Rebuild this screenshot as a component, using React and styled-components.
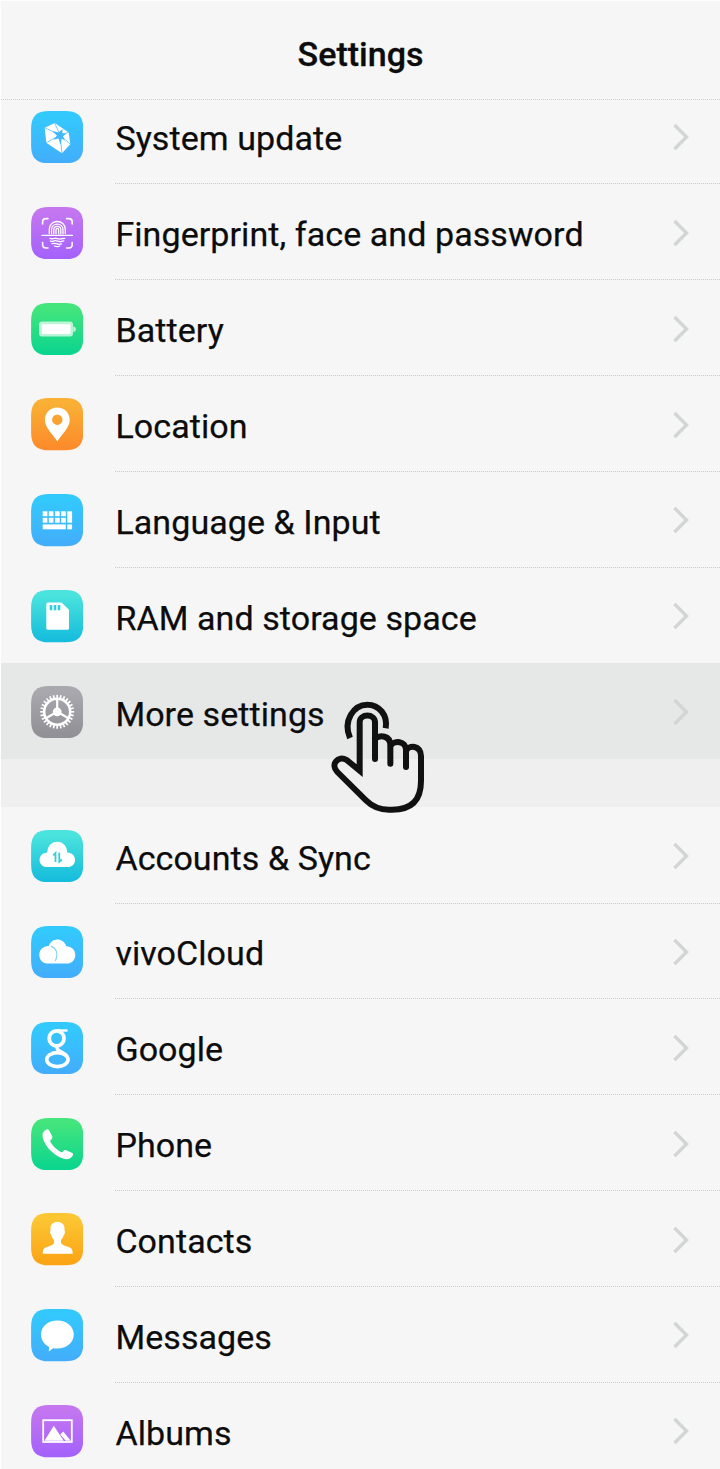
import React from "react";
import styled, { createGlobalStyle } from "styled-components";

const GlobalStyle = createGlobalStyle`
  * { box-sizing: border-box; }
  html, body { margin: 0; background: #f6f6f6; }
`;

const Screen = styled.main`
  width: 720px;
  height: 1469px;
  overflow: hidden;
  display: flex;
  flex-direction: column;
  background: #f6f6f6;
  border-top: 1px solid #fefefe;
  border-left: 1px solid #fefefe;
  color: #0c0c0c;
  font-family: Roboto, "Liberation Sans", sans-serif;
`;

const Header = styled.header`
  flex: none;
  height: 99px;
  display: flex;
  align-items: center;
  justify-content: center;
  padding-top: 7px;
  border-bottom: 1px dotted #cbcccd;
`;

const Title = styled.h1`
  margin: 0;
  font-size: 34px;
  line-height: 40px;
  font-weight: 500;
  -webkit-text-stroke: 0.3px #0c0c0c;
`;

const Viewport = styled.div`
  flex: 1;
  min-height: 0;
  overflow: hidden;
`;

const List = styled.div`
  margin-top: -11.9px;
`;

const Group = styled.section`
  & + & {
    border-top: 48px solid #efeff0;
  }
`;

const Row = styled.div`
  position: relative;
  height: 95.88px;
  display: flex;
  align-items: center;
  padding-left: 30px;
  background: ${(p) => (p.$active ? "#e6e7e7" : "transparent")};
`;

const Tile = styled.svg`
  flex: none;
  display: block;
  width: 52.4px;
  height: 52.4px;
  margin-top: 2px;
`;

const Body = styled.div`
  flex: 1;
  height: 100%;
  margin-left: 32px;
  padding-right: 30px;
  display: flex;
  align-items: center;
  justify-content: space-between;
  position: relative;
  top: 0.4px;
  border-bottom: 1px dotted ${(p) => (p.$line ? "#c9cacd" : "transparent")};
`;

const Label = styled.span`
  font-size: 34px;
  line-height: 40px;
  padding-top: 5px;
  letter-spacing: 0.08px;
  white-space: nowrap;
  -webkit-text-stroke: 0.25px #0c0c0c;
`;

const Chevron = styled.svg`
  width: 18px;
  height: 28px;
  margin-top: 2px;
  fill: none;
  stroke: #d2d5d5;
  stroke-width: 3.4;
`;

const TapHand = styled.svg`
  position: absolute;
  left: 329px;
  top: 36.6px;
  width: 96.7px;
  height: 115px;
  z-index: 2;
  fill: none;
  stroke: #111;
  stroke-width: 18;
`;

const palettes = {
  blue: ["#33c9fd", "#42aefb"],
  purple: ["#c476f0", "#a562fb"],
  green: ["#43e57c", "#0cd58e"],
  orange: ["#f9b034", "#fc8b2b"],
  teal: ["#4ae3dd", "#16bddc"],
  gray: ["#a9a8ae", "#919096"],
  yellow: ["#fcc633", "#fba415"],
};

const spin = (n) => Array.from({ length: n }, (_, i) => (i * 360) / n);

const glyphs = {
  update: (
    <>
      <path d="M13.7 16.7 23.7 12 37.7 21.4 39.3 33.3 31 42.3 15.3 31.7Z" fill="#fff" />
      <path d="M29 24 13.7 16.7M29 24 23.7 12M29 24 37.7 21.4M29 24 39.3 33.3M29 24 31 42.3M29 24 15.3 31.7" stroke="#55bffb" strokeWidth=".8" />
      <path d="M21.500 20 27.500 21.500 31.500 18 31.300 22.300 35.500 22.500 32 25.300 34 29.500 30.600 27.700 29.700 34 27.500 27.500 22.500 28.800 26 24.700Z" fill="#3fb9fc" />
    </>
  ),
  finger: (
    <g fill="none" stroke="#fff" strokeLinecap="round">
      <path strokeWidth="1.6" d="M11.6 17V15q0-3.4 3.4-3.4h2M35.6 11.6h2.2q3.4 0 3.4 3.4v2M41.2 35.6v2q0 3.4-3.4 3.4h-2.2M17 41h-2q-3.4 0-3.4-3.4v-2" />
      <path strokeWidth="1.4" d="M11 28.4h30.4" />
      <path strokeWidth="1.3" d="M18.3 26.5v-4.2c0-10.4 16-10.4 16 0v4.2M20.6 26.8v-4.3c0-7.2 11.4-7.2 11.4 0v4.3M22.8 26.8v-4.2c0-4.4 7-4.4 7 0v4.2M25 26.8v-4c0-1.8 2.6-1.8 2.6 0v4" />
      <path strokeWidth="1.3" d="M18.8 31.3c1.8 1 3 .2 4.8 0 2-.3 3.5 1 5.4.8 1.600-.1 3-.8 4.800-.8M19.300 34c2 1 3-.3 5-.3s3.500 1.300 5.500 1c1.200-.2 2-.7 3-.9M21 36.700c2-.700 3.500-.500 5 .200s2.500.700 4.500.1M23.500 39c2 .8 3.500.8 5.300 0" />
    </g>
  ),
  battery: (
    <>
      <rect x="8" y="18.6" width="34" height="15" rx="3" fill="#fff" opacity=".68" />
      <path d="M42.300 23.200q2.500.500 2.500 3t-2.500 3Z" fill="#fff" opacity=".75" />
      <rect x="10.800" y="21.200" width="28.700" height="9.700" rx="1" fill="#fff" />
    </>
  ),
  pin: (
    <path fill="#fff" fillRule="evenodd" d="M26.300 9.500c-7 0-12.400 5.400-12.400 12.200 0 8.200 8 14.300 12.400 21.800 4.400-7.500 12.400-13.600 12.400-21.800 0-6.800-5.400-12.200-12.400-12.200Zm0 7a5.200 5.200 0 1 1 0 10.400 5.200 5.200 0 0 1 0-10.400Z" />
  ),
  keyboard: (
    <g fill="#fff">
      {[11.7, 17.8, 24, 30.1].map((x) => (
        <React.Fragment key={x}>
          <rect x={x} y="17.3" width="4.7" height="4.9" />
          <rect x={x} y="23.8" width="4.7" height="4.9" />
        </React.Fragment>
      ))}
      <rect x="36.3" y="17.3" width="4.8" height="11.4" />
      <rect x="11.7" y="30.4" width="23.1" height="4.9" />
      <rect x="36.3" y="30.4" width="4.8" height="4.9" />
    </g>
  ),
  card: (
    <>
      <path fill="#fff" d="M17 12.400h13.500l7.500 7.300v18.500q0 1.600-1.600 1.600H17q-1.700 0-1.700-1.600V14q0-1.600 1.700-1.600Z" />
      <path stroke="#2fcfdc" strokeWidth="2.6" d="M20 15v5.200M24 15v5.200M28 15v5.200" />
    </>
  ),
  gear: (
    <g fill="none" stroke="#fff" transform="translate(26.2 25.8)">
      <circle r="13" strokeWidth="2.5" />
      {spin(28).map((a) => (
        <path key={a} d="M0-13.5V-17" strokeWidth="1.7" transform={`rotate(${a})`} />
      ))}
      {spin(3).map((a) => (
        <path key={a} d="M0 0V-13" strokeWidth="2.2" transform={`rotate(${a})`} />
      ))}
      <circle r="4.4" fill="#fff" stroke="none" />
    </g>
  ),
  sync: (
    <>
      <path fill="#fff" d="M16 37c-4.300 0-7.400-3.100-7.400-7.100 0-4.200 3.200-7.300 7.700-7.500C16.500 16 20.600 11.700 26.300 11.700S36 16 36.300 22.400c4.600.2 7.800 3.300 7.800 7.500 0 4-3.200 7.100-7.500 7.100Z" />
      <path fill="none" stroke="#35cedb" strokeWidth="1.8" d="M22.200 25.500 24.500 23v9M30.800 29.500 28.300 31.700V22.400" />
    </>
  ),
  cloud: (
    <>
      <path fill="#fff" d="M17 37.600c-5 0-8.700-3.800-8.700-8.700 0-5.400 4-9 9.300-9C19.500 15.700 22.500 13.500 26 13.500c4.500 0 8 2.700 9.300 6.700 5.200.1 9 3.800 9 8.700s-3.700 8.700-8.700 8.700Z" />
      <path fill="none" stroke="#7fd0fa" strokeWidth="1.1" d="M20 20.400c5.300 1.600 7.800 7.500 4.200 14.500" />
    </>
  ),
  google: (
    <g fill="none" stroke="#fff">
      <ellipse cx="25.6" cy="16.4" rx="7.4" ry="7.6" strokeWidth="3.8" />
      <path strokeWidth="2.4" d="M26 8.500H36.500" />
      <path strokeWidth="2" d="M29.500 9.500l3 3.500" />
      <path strokeWidth="3.4" d="M27 24.500c-1.800 2-.8 3.200 1.200 4.300 3 1.600 6 2.800 8 5.600" />
      <ellipse cx="26.400" cy="37.600" rx="10.700" ry="7" strokeWidth="3.600" />
    </g>
  ),
  phone: (
    <path fill="#fff" d="M15.500 11.500c1.500-.5 2.500.5 3.200 2l2.400 4.600c.7 1.500.2 2.600-1.100 3.600-1.400 1-.7 2.300.8 4.200 2 2.700 4.300 4.900 7 6.900 1.800 1.300 3.200 2.100 4.200.7 1-1.300 2.100-1.800 3.700-1.100l5.100 2.400c1.500.7 1.700 1.800.7 3.200-1.300 1.900-3.200 3.200-5.700 3.200-4.500 0-11.200-3.500-16.300-8.700-4.900-5-8-11.100-8-15.300 0-2.700 1.600-4.800 4-5.700Z" />
  ),
  person: (
    <path fill="#fff" d="M26.400 9c4.600 0 7.100 2.500 7.100 6.500v2.200c1 .3.600 3.300-.7 4-.5 2.200-1.500 4-2.800 5.200v3.200c1.500 2.500 4.600 3 7.600 4 3 1 4 2.300 4.100 6.600h-30c.1-4.300 1.100-5.600 4.100-6.600 3-1 6.100-1.500 7.200-4v-3.200c-1.300-1.200-2.300-3-2.700-5.200-1.300-.7-1.700-3.700-.8-4v-2.200C19.500 11.500 21.800 9 26.400 9Z" />
  ),
  message: (
    <path fill="#fff" d="M26.400 11.600c9.200 0 16.400 6.100 16.400 14s-7.200 14-16.400 14q-2.200 0-4.200-.4L17.800 42.600l.2-4.700C13.200 35.700 10 31 10 25.600c0-7.900 7.200-14 16.400-14Z" />
  ),
  album: (
    <>
      <rect x="12.2" y="15.2" width="28.6" height="21.8" fill="none" stroke="#fff" strokeWidth="1.8" />
      <path fill="#fff" d="M13.500 35.800 22.800 20.700 32.700 35.800ZM29.300 29.500l3-3 7.500 9.300h-5.100Z" />
    </>
  ),
};

function AppIcon({ name, tone }) {
  const [top, bottom] = palettes[tone];
  const id = `fill-${name}`;
  return (
    <Tile viewBox="0 0 52.4 52.4" aria-hidden="true">
      <defs>
        <linearGradient id={id} x1="0" y1="0" x2="0" y2="1">
          <stop offset="0.1" stopColor={top} />
          <stop offset="0.95" stopColor={bottom} />
        </linearGradient>
      </defs>
      <path
        fill={`url(#${id})`}
        d="M18 .1H34.400C47 .1 52.300 5.500 52.300 18V34.400C52.300 47 47 52.300 34.400 52.300H18C5.500 52.300.1 47 .1 34.400V18C.1 5.500 5.500.1 18 .1Z"
      />
      {glyphs[name]}
    </Tile>
  );
}

function Hand() {
  return (
    <TapHand viewBox="60 150 290 345" aria-hidden="true">
      <path d="M120 264C98 214 130 164 172 164C207 164 234 195 227 235" />
      <path strokeLinejoin="miter" d="M195 268V217C195 190 149 190 149 217V362L110 330C84 315 60 344 82 366L168 451C187 470 207 479 237 479H246C305 479 333 450 333 392V318C333 285 296 284 288 302" />
      <path strokeLinecap="round" d="M195 250V327M195 266C210 254 241 256 241 286V341M241 288C252 270 288 272 288 300V351" />
    </TapHand>
  );
}

const groups = [
  [
    { label: "System update", icon: "update", tone: "blue" },
    { label: "Fingerprint, face and password", icon: "finger", tone: "purple" },
    { label: "Battery", icon: "battery", tone: "green" },
    { label: "Location", icon: "pin", tone: "orange" },
    { label: "Language & Input", icon: "keyboard", tone: "blue" },
    { label: "RAM and storage space", icon: "card", tone: "teal" },
    { label: "More settings", icon: "gear", tone: "gray", active: true },
  ],
  [
    { label: "Accounts & Sync", icon: "sync", tone: "teal" },
    { label: "vivoCloud", icon: "cloud", tone: "blue" },
    { label: "Google", icon: "google", tone: "blue" },
    { label: "Phone", icon: "phone", tone: "green" },
    { label: "Contacts", icon: "person", tone: "yellow" },
    { label: "Messages", icon: "message", tone: "blue" },
    { label: "Albums", icon: "album", tone: "purple" },
  ],
];

function SettingRow({ label, icon, tone, active, line }) {
  return (
    <Row $active={active}>
      <AppIcon name={icon} tone={tone} />
      <Body $line={line}>
        <Label>{label}</Label>
        <Chevron viewBox="0 0 18 28" aria-hidden="true">
          <path d="M2.500 2 14.500 14 2.500 26" />
        </Chevron>
      </Body>
      {active && <Hand />}
    </Row>
  );
}

export default function App() {
  return (
    <>
      <GlobalStyle />
      <Screen>
        <Header>
          <Title>Settings</Title>
        </Header>
        <Viewport>
          <List>
            {groups.map((rows, g) => (
              <Group key={g}>
                {rows.map((row, i) => (
                  <SettingRow key={row.label} {...row} line={i < rows.length - 1} />
                ))}
              </Group>
            ))}
          </List>
        </Viewport>
      </Screen>
    </>
  );
}
